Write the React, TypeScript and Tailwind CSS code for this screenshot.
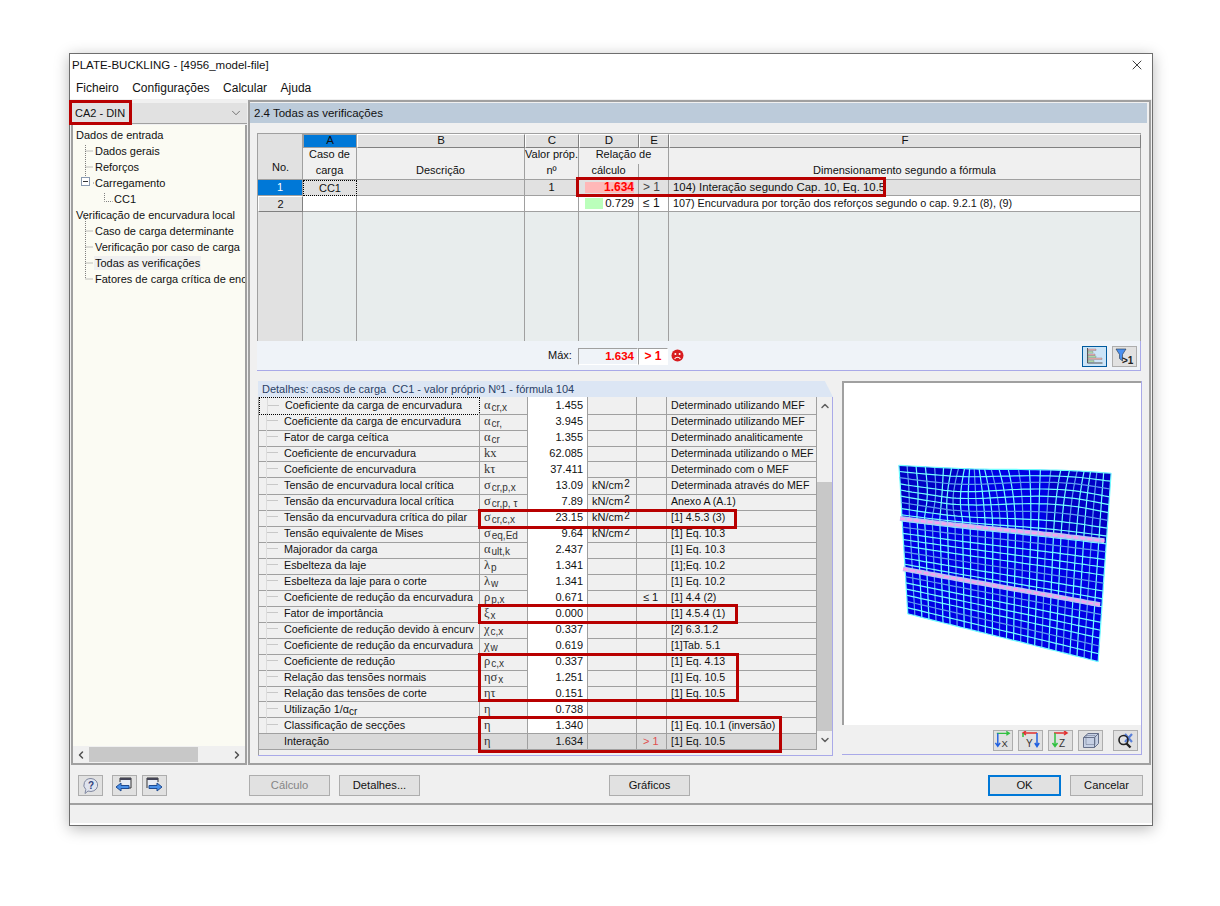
import { ChevronDown, ChevronLeft, ChevronRight, ChevronUp, X } from "lucide-react";
import type { ReactNode } from "react";

const detailRows = [
  { name: "Coeficiente da carga de encurvadura", sym: "α", sub: "cr,x", value: "1.455", unit: false, check: "", ref: "Determinado utilizando MEF" },
  { name: "Coeficiente da carga de encurvadura", sym: "α", sub: "cr,", value: "3.945", unit: false, check: "", ref: "Determinado utilizando MEF" },
  { name: "Fator de carga ceítica", sym: "α", sub: "cr", value: "1.355", unit: false, check: "", ref: "Determinado analiticamente" },
  { name: "Coeficiente de encurvadura", sym: "kx", sub: "", value: "62.085", unit: false, check: "", ref: "Determinada utilizando o MEF" },
  { name: "Coeficiente de encurvadura", sym: "kτ", sub: "", value: "37.411", unit: false, check: "", ref: "Determinado com o MEF" },
  { name: "Tensão de encurvadura local crítica", sym: "σ", sub: "cr,p,x", value: "13.09", unit: true, check: "", ref: "Determinada através do MEF" },
  { name: "Tensão da encurvadura local crítica", sym: "σ", sub: "cr,p, τ", value: "7.89", unit: true, check: "", ref: "Anexo A (A.1)" },
  { name: "Tensão da encurvadura crítica do pilar", sym: "σ", sub: "cr,c,x", value: "23.15", unit: true, check: "", ref: "[1] 4.5.3 (3)" },
  { name: "Tensão equivalente de Mises", sym: "σ", sub: "eq,Ed", value: "9.64", unit: true, check: "", ref: "[1] Eq. 10.3" },
  { name: "Majorador da carga", sym: "α", sub: "ult,k", value: "2.437", unit: false, check: "", ref: "[1] Eq. 10.3" },
  { name: "Esbelteza da laje", sym: "λ", sub: "p", value: "1.341", unit: false, check: "", ref: "[1];Eq. 10.2" },
  { name: "Esbelteza da laje para o corte", sym: "λ", sub: "w", value: "1.341", unit: false, check: "", ref: "[1] Eq. 10.2" },
  { name: "Coeficiente de redução da encurvadura", sym: "ρ", sub: "p,x", value: "0.671", unit: false, check: "≤ 1", ref: "[1] 4.4 (2)" },
  { name: "Fator de importância", sym: "ξ", sub: "x", value: "0.000", unit: false, check: "", ref: "[1] 4.5.4 (1)" },
  { name: "Coeficiente de redução devido à encurv", sym: "χ", sub: "c,x", value: "0.337", unit: false, check: "", ref: "[2] 6.3.1.2" },
  { name: "Coeficiente de redução da encurvadura", sym: "χ", sub: "w", value: "0.619", unit: false, check: "", ref: "[1]Tab. 5.1" },
  { name: "Coeficiente de redução", sym: "ρ", sub: "c,x", value: "0.337", unit: false, check: "", ref: "[1] Eq. 4.13" },
  { name: "Relação das tensões normais", sym: "ησ", sub: "x", value: "1.251", unit: false, check: "", ref: "[1] Eq. 10.5" },
  { name: "Relação das tensões de corte", sym: "ητ", sub: "", value: "0.151", unit: false, check: "", ref: "[1] Eq. 10.5" },
  { name: "Utilização 1/α", nameSub: "cr", sym: "η", sub: "", value: "0.738", unit: false, check: "", ref: "" },
  { name: "Classificação de secções", sym: "η", sub: "", value: "1.340", unit: false, check: "", ref: "[1] Eq. 10.1 (inversão)" },
  { name: "Interação", sym: "η", sub: "", value: "1.634", unit: false, check: "> 1", ref: "[1] Eq. 10.5" },
];

const treeItems = [
  { label: "Dados de entrada", indent: "pl-[3px]" },
  { label: "Dados gerais", indent: "pl-[22px]" },
  { label: "Reforços", indent: "pl-[22px]" },
  { label: "Carregamento", indent: "pl-[22px]" },
  { label: "CC1", indent: "pl-[41px]" },
  { label: "Verificação de encurvadura local", indent: "pl-[3px]" },
  { label: "Caso de carga determinante", indent: "pl-[22px]" },
  { label: "Verificação por caso de carga", indent: "pl-[22px]" },
  { label: "Todas as verificações", indent: "pl-[22px]", active: true },
  { label: "Fatores de carga crítica de encurvadura", indent: "pl-[22px]" },
];

// warped plate: u,v in 0..1 mapped on to the four corners of the drawing
function platePoint(u: number, v: number) {
  const left = 897 + (906 - 897) * v;
  const right = 1110 + (1097 - 1110) * v;
  const top = 463 + (471 - 463) * u;
  const bottom = 612 + (660 - 612) * u;
  const fade = Math.max(0, 1 - v / 0.4);
  const near = (u - 0.2) / 0.1;
  const pinch = near * Math.exp(-near * near) * Math.sin(Math.min(v / 0.32, 1) * Math.PI);
  const dx = 10 * Math.sin(u * Math.PI * 3) * Math.sin(u * Math.PI) * fade * fade - 7 * pinch;
  const dy = 5 * Math.sin(u * Math.PI * 2) * Math.sin(Math.min(v / 0.36, 1) * Math.PI * 0.9 + 0.2) * (v < 0.8 ? 1 - v : 0.2);
  return { x: left + (right - left) * u + dx, y: top + (bottom - top) * v + dy };
}

function linePath(points: { x: number; y: number }[]) {
  return points.map((p) => `${p.x.toFixed(1)},${p.y.toFixed(1)}`).join(" ");
}

function PlateMesh() {
  const cols = 27;
  const rows = 24;
  const cells: ReactNode[] = [];
  for (let i = 0; i < cols; i++) {
    for (let j = 0; j < rows; j++) {
      const u = i / cols;
      const v = j / rows;
      const a = platePoint(u, v);
      const b = platePoint(u + 1 / cols, v);
      const c = platePoint(u + 1 / cols, v + 1 / rows);
      const d = platePoint(u, v + 1 / rows);
      const dark = (v < 0.26 && u < 0.28) || (v < 0.36 && u > 0.7);
      cells.push(<polygon key={`${i}-${j}`} points={linePath([a, b, c, d])} fill={dark ? "#0000c4" : "#0000e4"} />);
    }
  }
  const vertical = Array.from({ length: cols + 1 }, (_, i) =>
    Array.from({ length: 41 }, (_, k) => platePoint(i / cols, k / 40))
  );
  const horizontal = Array.from({ length: rows + 1 }, (_, j) =>
    Array.from({ length: 41 }, (_, k) => platePoint(k / 40, j / rows))
  );
  const stiffener = (v: number) => Array.from({ length: 31 }, (_, k) => platePoint(-0.01 + (k / 30) * 1.0, v));
  return (
    <svg viewBox="842 381 298 342" className="h-full w-full">
      {cells}
      {vertical.map((pts, i) => (
        <polyline key={i} points={linePath(pts)} fill="none" stroke={i % 3 === 1 ? "#5a9cf0" : "#70fcff"} strokeWidth="1.2" />
      ))}
      {horizontal.map((pts, j) => (
        <polyline key={j} points={linePath(pts)} fill="none" stroke={j % 4 === 2 ? "#5a9cf0" : "#70fcff"} strokeWidth="1.2" />
      ))}
      {[0.36, 0.7].map((v) => (
        <g key={v}>
          <polyline points={linePath(stiffener(v))} fill="none" stroke="#b8c4f0" strokeWidth="5" />
          <polyline points={linePath(stiffener(v))} fill="none" stroke="#f8a0f0" strokeWidth="2.2" strokeDasharray="5 2" />
        </g>
      ))}
    </svg>
  );
}

function IconButton({ children, active }: { children: ReactNode; active?: boolean }) {
  return (
    <button
      className={
        active
          ? "flex h-[21px] w-[25px] items-center justify-center border-[1px] border-[#005a9e] bg-[#cce4f7]"
          : "flex h-[21px] w-[25px] items-center justify-center border border-[#adadad] bg-[#e1e1e1]"
      }
    >
      {children}
    </button>
  );
}

function AxisX() {
  return (
    <svg width="19" height="18" viewBox="0 0 19 18">
      <path d="M3 2h13M13 0l3 2-3 2" fill="none" stroke="#30c040" strokeWidth="1.5" />
      <path d="M4 2v13M1.500 12l2.500 3.500 2.500-3.500" fill="none" stroke="#2060e0" strokeWidth="1.5" />
      <text x="8" y="16" fontSize="10" fill="#333" fontFamily="Liberation Sans, sans-serif">X</text>
    </svg>
  );
}

function AxisY() {
  return (
    <svg width="21" height="18" viewBox="0 0 21 18">
      <path d="M3 2h14M6 0L3 2l3 2" fill="none" stroke="#e03030" strokeWidth="1.5" />
      <path d="M3 2v4" fill="none" stroke="#30c040" strokeWidth="1.5" />
      <path d="M17 2v13M14.800 12l2.200 3.500 2.200-3.500" fill="none" stroke="#2060e0" strokeWidth="1.5" />
      <text x="6" y="16" fontSize="10" fill="#333" fontFamily="Liberation Sans, sans-serif">Y</text>
    </svg>
  );
}

function AxisZ() {
  return (
    <svg width="19" height="18" viewBox="0 0 19 18">
      <path d="M3 2h13M13 0l3 2-3 2" fill="none" stroke="#e03030" strokeWidth="1.5" />
      <path d="M4 2v13M1.500 12l2.500 3.500 2.500-3.500" fill="none" stroke="#30c040" strokeWidth="1.500" />
      <text x="8" y="16" fontSize="10" fill="#333" fontFamily="Liberation Sans, sans-serif">Z</text>
    </svg>
  );
}

function Symbol({ sym, sub }: { sym: string; sub: string }) {
  return (
    <span className="whitespace-nowrap font-['Liberation_Serif','DejaVu_Serif',serif] text-[12.5px] text-[#333]">
      {sym}
      {sub && <span className="relative top-[2px] ml-[1px] font-['Liberation_Sans',sans-serif] text-[10px]">{sub}</span>}
    </span>
  );
}

function Unit() {
  return (
    <span className="whitespace-nowrap">
      kN/cm<span className="relative -top-[2px] ml-[1px] text-[10px]">2</span>
    </span>
  );
}

function TopTable() {
  const cell = "border-r border-b border-[#a0a0a0]";
  const letter =
    "flex h-[14px] items-center justify-center border-t border-l border-r border-b border-t-white border-l-white border-r-[#808080] border-b-[#808080] bg-[#e1e1e1] text-[11.5px] leading-none";
  return (
    <div className="grid h-[208px] grid-cols-[45px_54px_168px_54px_60px_30px_472px] grid-rows-[14px_16px_16px_16px_16px_1fr] border-t border-l border-[#a0a0a0] bg-[#f0f0f0] text-[11px] text-[#111]">
      <div className={`${cell} row-span-3 flex items-end justify-center bg-[#e1e1e1] pb-[3px] pl-[1px]`}>No.</div>
      <div className="flex h-[14px] items-center justify-center border border-[#a0a0a0] bg-[#0078d7] text-[11.5px] leading-none">A</div>
      <div className={letter}>B</div>
      <div className={letter}>C</div>
      <div className={letter}>D</div>
      <div className={letter}>E</div>
      <div className={letter}>F</div>

      <div className={`${cell} row-span-2 text-center leading-[16px]`}><div className="-mt-[2px]">Caso de<br />carga</div></div>
      <div className={`${cell} row-span-2 flex items-end justify-center pb-[1px] leading-[16px]`}>Descrição</div>
      <div className={`${cell} row-span-2 text-center leading-[16px]`}><div className="-mt-[2px]">Valor próp.<br />nº</div></div>
      <div className="col-span-2 border-r border-[#a0a0a0] text-center leading-[16px]"><div className="-mt-[2px]">Relação de</div></div>
      <div className={`${cell} row-span-2 flex items-end justify-center pb-[1px] leading-[16px]`}>Dimensionamento segundo a fórmula</div>
      <div className={`${cell} text-center leading-[16px]`}><div className="-mt-[2px]">cálculo</div></div>
      <div className={cell}></div>

      <div className="flex items-center justify-center border-r border-b border-[#a0a0a0] bg-[#0078d7] text-white">1</div>
      <div className="flex items-center justify-center border border-dotted border-black bg-[#e1e1e1]">CC1</div>
      <div className={`${cell} bg-[#e1e1e1]`}></div>
      <div className={`${cell} bg-[#e1e1e1] text-center leading-[15px]`}>1</div>
      <div className={`${cell} relative bg-[#e1e1e1] pr-[4px] text-right text-[12px] font-bold leading-[15px] text-[#ff0000]`}>
        <span className="absolute top-[2px] left-[6px] h-[11px] w-[49px] bg-[#ffb8b8]"></span>
        <span className="relative">1.634</span>
      </div>
      <div className={`${cell} bg-[#e1e1e1] pl-[4px] text-[12px] leading-[15px] text-[#444]`}>&gt; 1</div>
      <div className={`${cell} bg-[#e1e1e1] pl-[4px] text-[11.4px] leading-[15px]`}>104) Interação segundo Cap. 10, Eq. 10.5</div>

      <div className="flex items-center justify-center border-t border-l border-r border-b border-t-white border-l-white border-r-[#808080] border-b-[#808080] bg-[#e1e1e1]">2</div>
      <div className={`${cell} bg-white`}></div>
      <div className={`${cell} bg-white`}></div>
      <div className={`${cell} bg-white`}></div>
      <div className={`${cell} relative bg-white pr-[4px] text-right text-[11.5px] leading-[15px]`}>
        <span className="absolute top-[2px] left-[6px] h-[11px] w-[18px] bg-[#bbffbb]"></span>
        <span className="relative">0.729</span>
      </div>
      <div className={`${cell} bg-white pl-[4px] text-[12px] leading-[15px]`}>≤ 1</div>
      <div className={`${cell} bg-white pl-[4px] text-[10.8px] leading-[15px]`}>107) Encurvadura por torção dos reforços segundo o cap. 9.2.1 (8), (9)</div>

      <div className="border-r border-[#a0a0a0] bg-[#e1e1e1]"></div>
      <div className="border-r border-[#a0a0a0] bg-[#e8eded]"></div>
      <div className="border-r border-[#a0a0a0] bg-[#e8eded]"></div>
      <div className="border-r border-[#a0a0a0] bg-[#e8eded]"></div>
      <div className="border-r border-[#a0a0a0] bg-[#e8eded]"></div>
      <div className="border-r border-[#a0a0a0] bg-[#e8eded]"></div>
      <div className="border-r border-[#a0a0a0] bg-[#e8eded]"></div>
    </div>
  );
}

function MaxBar() {
  return (
    <div className="flex h-[30px] items-start border-r border-b border-[#a9a9e8] bg-[#eff3f8] text-[11px] text-[#111]">
      <span className="mt-[6px] ml-[291px] w-[30px]">Máx:</span>
      <div className="mt-[7px] flex h-[17px] w-[60px] items-center justify-end border border-t-[#a0a0a0] border-l-[#a0a0a0] border-r-white border-b-white pr-[3px] text-[11.5px] font-bold text-[#ff0000]">1.634</div>
      <div className="mt-[7px] flex h-[17px] w-[30px] items-center justify-center border border-t-[#a0a0a0] border-l-[#a0a0a0] border-r-white border-b-white bg-white text-[12px] font-bold text-[#ff0000]">&gt; 1</div>
      <svg width="13" height="13" viewBox="0 0 13 13" className="mt-[8px] ml-[3px]">
        <circle cx="6.500" cy="6.500" r="6" fill="#d81c20" />
        <circle cx="4.400" cy="5" r="1" fill="#fff" />
        <circle cx="8.600" cy="5" r="1" fill="#fff" />
        <path d="M3.600 9.800c1.600-2 4.200-2 5.800 0" fill="none" stroke="#fff" strokeWidth="1.100" />
      </svg>
      <div className="mt-[5px] ml-auto mr-[3px] flex gap-[5px]">
        <IconButton active>
          <svg width="17" height="16" viewBox="0 0 17 16">
            <path d="M1.500 0v15h15" fill="none" stroke="#555" strokeWidth="1" />
            <path d="M2 1h8v1.500H2zM2 6h7v1.500H2zM2 10h14v1.500H2z" fill="#f4b0b0" stroke="#777" strokeWidth=".4" />
            <path d="M2 3.500h5V5H2zM2 8h8v1.500H2zM2 12.500h6V14H2z" fill="#b8f0b0" stroke="#777" strokeWidth=".4" />
          </svg>
        </IconButton>
        <IconButton>
          <svg width="19" height="17" viewBox="0 0 19 17">
            <path d="M1 1h10L7.500 6.500V13L4.500 10.500V6.500z" fill="#4a90f0" stroke="#234" strokeWidth=".6" />
            <text x="7" y="15.500" fontSize="10" fontWeight="bold" fill="#222" fontFamily="Liberation Sans, sans-serif">&gt;1</text>
          </svg>
        </IconButton>
      </div>
    </div>
  );
}

function DetailTable() {
  return (
    <div className="flex h-[358px] w-[574px]">
      <div className="w-[559px] border-l border-[#a0a0a0] text-[11px] text-[#111]">
        {detailRows.map((row, i) => {
          const last = i === detailRows.length - 1;
          const bg = last ? "bg-[#d9d9d9]" : "bg-[#f0f0f0]";
          return (
            <div key={i} className={`grid h-[16px] grid-cols-[221px_48px_60px_49px_30px_150px] ${bg} leading-[16px]`}>
              <div className={i === 0 ? "flex overflow-hidden border border-dotted border-black" : "flex overflow-hidden border-r border-b border-[#a0a0a0]"}>
                <span className={`ml-[7px] h-full w-[1px] ${last ? "" : "bg-[#dcdcdc]"}`}></span>
                <span className={`mt-[7px] h-[1px] w-[11px] ${last ? "" : "bg-[#c8c8c8]"}`}></span>
                <span className={`ml-[6px] whitespace-nowrap text-[10.8px] ${i === 0 ? "-mt-px" : ""}`}>
                  {row.name}
                  {row.nameSub && <span className="relative top-[2px] text-[10px]">{row.nameSub}</span>}
                </span>
              </div>
              <div className="border-r border-b border-[#a0a0a0] pl-[4px]">
                <Symbol sym={row.sym} sub={row.sub} />
              </div>
              <div className={`border-r border-b border-[#a0a0a0] pr-[4px] text-right ${last ? "" : "bg-white"}`}>{row.value}</div>
              <div className="border-r border-b border-[#a0a0a0] pl-[4px]">{row.unit && <Unit />}</div>
              <div className={`border-r border-b border-[#a0a0a0] pl-[6px] ${last ? "text-[#e05050]" : ""}`}>{row.check}</div>
              <div className="overflow-hidden whitespace-nowrap border-r border-b border-[#a0a0a0] pl-[4px] text-[10.6px] leading-[17px]">{row.ref}</div>
            </div>
          );
        })}
      </div>
      <div className="flex h-[352px] w-[15px] flex-col bg-[#f0f0f0]">
        <ChevronUp size={12} strokeWidth={3} className="mx-auto mt-[3px] text-[#606060]" />
        <div className="mt-[70px] flex-1 bg-[#c8c8c8]"></div>
        <ChevronDown size={12} strokeWidth={3} className="mx-auto my-[3px] text-[#606060]" />
      </div>
    </div>
  );
}

function PreviewPanel() {
  return (
    <div className="flex h-[374px] w-[300px] flex-col border-r border-b border-[#a9a9e8]">
      <div className="h-[344px] border-t-2 border-l-2 border-[#a0a0a0] bg-white">
        <PlateMesh />
      </div>
      <div className="mt-[5px] flex gap-[5px] self-end pr-[3px] [&>button:nth-child(1)]:w-[20px]">
        <IconButton><AxisX /></IconButton>
        <IconButton><AxisY /></IconButton>
        <IconButton><AxisZ /></IconButton>
        <IconButton>
          <svg width="18" height="17" viewBox="0 0 18 17" fill="#c6d0e4" stroke="#66708a" strokeWidth="1">
            <path d="M1.500 5.500 6 1.500h10.500v10L12.500 15.500H1.500z" />
            <path d="M1.500 5.500h11v10M12.500 5.500l4-4" fill="none" />
            <path d="M4 3.500h9v9H4z" fill="none" opacity=".5" />
          </svg>
        </IconButton>
        <button className="ml-[5px] flex h-[21px] w-[25px] items-center justify-center border border-[#adadad] bg-[#e1e1e1]">
          <svg width="19" height="17" viewBox="0 0 19 17">
            <path d="M9 2l7 8M16 2l-7 8" stroke="#5a80d8" strokeWidth="2.200" fill="none" />
            <circle cx="7.500" cy="8" r="4.500" fill="none" stroke="#222" strokeWidth="1.600" />
            <path d="M10.500 11.500l4 4" stroke="#222" strokeWidth="2.400" />
          </svg>
        </button>
      </div>
    </div>
  );
}

function Sidebar() {
  return (
    <div className="ml-px flex w-[176px] flex-col pt-[4px]">
      <div className="flex h-[21px] items-center justify-between border-b border-[#a0a0a0] bg-[#e1e1e1] pl-[4px] pr-[4px] text-[11px] text-[#111]">
        <span>CA2 - DIN</span>
        <ChevronDown size={14} strokeWidth={1.2} className="text-[#444]" />
      </div>
      <div className="relative mt-[1px] flex flex-1 flex-col overflow-hidden border-x-2 border-b-2 border-[#a0a0a0] bg-[#fbfbf3] text-[11px] text-[#111]">
        <svg width="40" height="160" className="absolute top-[2px] left-0" fill="none" stroke="#808080" strokeDasharray="1 1">
          <path d="M12.500 18v38M12.500 24h8M12.500 40h8M20 56h2M31.500 66v8.500h8M12.500 88v64M12.500 104h8M12.500 120h8M12.500 136h8M12.500 152h8" />
        </svg>
        <div className="flex-1 pt-[3px]">
          {treeItems.map((item) => (
            <div key={item.label} className={`h-[16px] whitespace-nowrap leading-[15px] ${item.indent}`}>
              <span className={item.active ? "-mx-[1px] bg-[#f0f0f0] px-[1px] py-[1px]" : ""}>{item.label}</span>
            </div>
          ))}
        </div>
        <span className="absolute top-[52px] left-[8px] flex h-[9px] w-[9px] items-center justify-center border border-[#8a9ab0] bg-white">
          <span className="h-px w-[5px] bg-[#333]"></span>
        </span>
        <div className="flex h-[17px] items-center bg-[#f0f0f0]">
          <ChevronLeft size={12} strokeWidth={3} className="ml-[2px] shrink-0 text-[#505050]" />
          <div className="ml-[2px] h-[15px] w-[109px] bg-[#c8c8c8]"></div>
          <ChevronRight size={12} strokeWidth={3} className="mr-[2px] ml-auto shrink-0 text-[#505050]" />
        </div>
      </div>
    </div>
  );
}

function Footer() {
  const btn = "flex h-[21px] w-[81px] items-center justify-center border border-[#adadad] bg-[#e1e1e1] text-[11.2px] text-[#111]";
  return (
    <div className="flex h-[38px] items-start bg-[#f0f0f0] pt-[10px]">
      <div className="ml-[8px] flex">
        <IconButton>
          <svg width="18" height="18" viewBox="0 0 18 18">
            <path d="M9 1.500a7 6.500 0 1 1-3 12.500l-3 2.500 .8-4A7 6.500 0 0 1 9 1.500z" fill="#dfe3ee" stroke="#8088a0" />
            <text x="6" y="12" fontSize="10" fontWeight="bold" fill="#30407a" fontFamily="Liberation Sans, sans-serif">?</text>
          </svg>
        </IconButton>
        <div className="ml-[9px] flex gap-[5px]">
          <IconButton>
            <svg width="19" height="17" viewBox="0 0 19 17">
              <path d="M5 5V1h11v10h-3" fill="#e8ecf4" stroke="#333" />
              <path d="M5 1h11v2H5z" fill="#445" />
              <path d="M6 6v2.500h8v3H6V14l-5-4z" fill="#4a90e8" stroke="#1f4a90" />
            </svg>
          </IconButton>
          <IconButton>
            <svg width="19" height="17" viewBox="0 0 19 17">
              <path d="M2 11V1h11v4" fill="#e8ecf4" stroke="#333" />
              <path d="M2 1h11v2H2z" fill="#445" />
              <path d="M12 6v2.500H4v3h8V14l5-4z" fill="#4a90e8" stroke="#1f4a90" />
            </svg>
          </IconButton>
        </div>
      </div>
      <div className="ml-[82px] flex gap-[9px]">
        <button className={`${btn} bg-[#cccccc] text-[#858585]`}>Cálculo</button>
        <button className={btn}>Detalhes...</button>
      </div>
      <button className={`${btn} ml-[189px]`}>Gráficos</button>
      <button className="ml-[298px] flex h-[21px] w-[73px] items-center justify-center border-2 border-[#0078d7] bg-[#e1e1e1] text-[11.2px] text-[#111]">OK</button>
      <button className="ml-[9px] flex h-[21px] w-[73px] items-center justify-center border border-[#adadad] bg-[#e1e1e1] text-[11.2px] text-[#111]">Cancelar</button>
    </div>
  );
}

export default function App() {
  return (
    <div className="relative h-[906px] w-[1220px] overflow-hidden bg-white pt-[53px] pl-[69px] font-['Liberation_Sans',Arial,sans-serif]">
      <div className="flex h-[773px] w-[1084px] flex-col border border-[#6e6e6e] bg-[#f0f0f0] shadow-[0_3px_14px_rgba(0,0,0,0.28)]">
        <div className="flex h-[23px] items-center justify-between bg-white pl-[2px] pr-[7px] text-[11.5px] text-[#111]">
          <span>PLATE-BUCKLING - [4956_model-file]</span>
          <X size={16} strokeWidth={1.3} className="text-[#222]" />
        </div>
        <div className="flex h-[22px] items-center gap-[13.500px] bg-white pl-[6px] text-[12px] text-[#111]">
          <span>Ficheiro</span>
          <span>Configurações</span>
          <span>Calcular</span>
          <span>Ajuda</span>
        </div>
        <div className="flex h-[667px]">
          <Sidebar />
          <div className="mt-px ml-px flex w-[903px] flex-col border-2 border-[#a0a0a0] border-l-2">
            <div className="mt-px mr-[2px] flex h-[20px] items-center bg-[#bccbda] pt-[2px] pl-[4px] text-[11.5px] text-[#111]">2.4 Todas as verificações</div>
            <div className="mt-[10px] ml-[7px] w-[884px]">
              <TopTable />
              <MaxBar />
            </div>
            <div className="mt-[10px] ml-[8px] flex">
              <div className="flex flex-col">
                <div className="flex h-[16px] w-[575px] items-center bg-[#dce6f4] pl-[4px] text-[11px] text-[#2a3f66] [clip-path:polygon(0_0,98.6%_0,100%_100%,0_100%)]">
                  Detalhes: casos de carga&nbsp;&nbsp;CC1 - valor próprio Nº1 - fórmula 104
                </div>
                <div className="w-[575px] border-r border-b border-[#a9a9e8]">
                  <DetailTable />
                </div>
              </div>
              <div className="ml-[9px]">
                <PreviewPanel />
              </div>
            </div>
          </div>
        </div>
        <Footer />
        <div className="h-[22px] border-t-2 border-[#a0a0a0] border-b-2 border-b-white bg-[#f0f0f0]"></div>
      </div>

      <div className="absolute top-[100px] left-[69px] h-[25px] w-[63px] border-[3px] border-[#b80000]"></div>
      <div className="absolute top-[177px] left-[576px] h-[20px] w-[310px] border-[3px] border-[#b80000]"></div>
      <div className="absolute top-[509px] left-[478px] h-[20px] w-[259px] border-[3px] border-[#b80000]"></div>
      <div className="absolute top-[604px] left-[478px] h-[20px] w-[260px] border-[3px] border-[#b80000]"></div>
      <div className="absolute top-[653px] left-[478px] h-[49px] w-[261px] border-[3px] border-[#b80000]"></div>
      <div className="absolute top-[716px] left-[478px] h-[37px] w-[304px] border-[3px] border-[#b80000]"></div>
    </div>
  );
}
